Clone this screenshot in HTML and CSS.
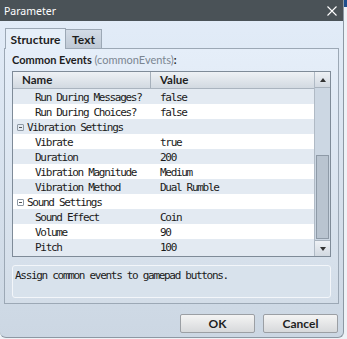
FILE: index.html
```html
<!DOCTYPE html>
<html lang="en">
<head>
    <meta charset="UTF-8">
    <meta name="viewport" content="width=device-width, initial-scale=1.0">
    <title>Parameter</title>
    <link rel="stylesheet" href="styles.css">
</head>
<body>

<div class="window">
    <div class="titlebar">
        <span class="title">Parameter</span>
        <svg class="close" width="10" height="10" viewBox="0 0 10 10">
            <path d="M0.5 0.5 L9.5 9.5 M9.5 0.5 L0.5 9.5" stroke="#fff" stroke-width="1.1" fill="none"/>
        </svg>
    </div>

    <div class="content">
        <div class="tabs">
            <div class="tab active">Structure</div>
            <div class="tab">Text</div>
        </div>

        <div class="panel">
            <div class="field-label">Common Events <span class="key">(commonEvents)</span>:</div>

            <div class="grid">
                <div class="grid-main">
                    <div class="grid-head">
                        <div class="col-name">Name</div>
                        <div class="col-value">Value</div>
                    </div>
                    <div class="row blue child"><span class="name">Run During Messages?</span><span class="value">false</span></div>
                    <div class="row child"><span class="name">Run During Choices?</span><span class="value">false</span></div>
                    <div class="row blue group"><span class="toggle"></span><span class="name">Vibration Settings</span></div>
                    <div class="row child"><span class="name">Vibrate</span><span class="value">true</span></div>
                    <div class="row blue child"><span class="name">Duration</span><span class="value">200</span></div>
                    <div class="row child"><span class="name">Vibration Magnitude</span><span class="value">Medium</span></div>
                    <div class="row blue child"><span class="name">Vibration Method</span><span class="value">Dual Rumble</span></div>
                    <div class="row group"><span class="toggle"></span><span class="name">Sound Settings</span></div>
                    <div class="row blue child"><span class="name">Sound Effect</span><span class="value">Coin</span></div>
                    <div class="row child"><span class="name">Volume</span><span class="value">90</span></div>
                    <div class="row blue child"><span class="name">Pitch</span><span class="value">100</span></div>
                </div>
                <div class="scrollbar">
                    <div class="sb-btn"><span class="arrow up"></span></div>
                    <div class="sb-track">
                        <div class="sb-thumb"></div>
                    </div>
                    <div class="sb-btn"><span class="arrow down"></span></div>
                </div>
            </div>

            <div class="description">Assign common events to gamepad buttons.</div>
        </div>

        <div class="buttons">
            <button class="btn">OK</button>
            <button class="btn">Cancel</button>
        </div>
    </div>
</div>
<div class="desk"></div>

</body>
</html>
```

FILE: styles.css
```css
body {
    margin: 0;
    display: flex;
    height: 339px;
    overflow: hidden;
    background: #eef2f6;
    font-family: Lato, "Noto Sans", sans-serif;
}
.window {
    width: 344px;
    height: 338px;
    box-sizing: border-box;
    border-right: 1px solid #8d98a3;
    border-bottom: 1px solid #8d98a3;
    border-radius: 0 0 6px 6px;
    background: linear-gradient(#e3edf9, #ccd7e3);
    display: flex;
    flex-direction: column;
    overflow: hidden;
}
.desk {
    flex: 1;
    background: linear-gradient(#1e4f8d 0 7px, #eef2f6 7px);
}
.titlebar {
    height: 21px;
    background: #4a5257;
    color: #fff;
    display: flex;
    align-items: center;
    justify-content: space-between;
    padding: 0 6px 0 4px;
    font-family: "Noto Sans", sans-serif;
    font-size: 10.5px;
}
.tabs {
    display: flex;
    align-items: flex-end;
    padding-left: 1px;
    height: 20px;
}
.content {
    padding: 7px 4px 0 4px;
}
.tab {
    box-sizing: border-box;
    border: 1px solid #9ca8b5;
    border-bottom: none;
    font-size: 12px;
    font-weight: 700;
    color: #1e1e1e;
    display: flex;
    align-items: center;
    justify-content: center;
}
.tab.active {
    width: 61px;
    height: 21px;
    background: #e6eff9;
    position: relative;
    top: 1px;
    z-index: 1;
}
.tab:not(.active) {
    width: 36px;
    height: 19px;
    background: linear-gradient(#d2dbe6, #bfc9d5);
    border-left: none;
}
.panel {
    box-sizing: border-box;
    width: 335px;
    height: 256px;
    border: 1px solid #9ca8b5;
    background: linear-gradient(#e5eef9, #d3dde8);
    padding: 2px 7px 0 7px;
}
.field-label {
    font-size: 11px;
    font-weight: 700;
    color: #1e1e1e;
    height: 20px;
    line-height: 18px;
}
.key {
    color: #7b8692;
    font-weight: 400;
}
.grid {
    display: flex;
    height: 186px;
    width: 319px;
    box-sizing: border-box;
    border: 1px solid #7f8b98;
    background: #e3eaf2;
    overflow: hidden;
}
.grid-main {
    flex: 1;
}
.grid-head {
    display: flex;
    height: 16px;
    background: linear-gradient(#eef1f5, #d2d9e1);
    border-bottom: 1px solid #aab4bf;
    font-size: 11.5px;
    font-weight: 700;
    color: #1e1e1e;
    line-height: 16px;
}
.col-name {
    width: 128px;
    padding-left: 9px;
    border-right: 1px solid #a6b0bb;
}
.col-value {
    padding-left: 9px;
}
.row {
    display: flex;
    height: 15px;
    align-items: center;
    background: #fff;
    font-family: "DejaVu Sans Mono", monospace;
    font-size: 11px;
    letter-spacing: -1.3px;
    color: #1a1a1a;
    padding-top: 1px;
    box-sizing: border-box;
}
.row.blue {
    background: #e3eaf2;
}
.row .name {
    width: 125px;
}
.row.child .name {
    padding-left: 22px;
}
.row.group .name {
    padding-left: 3px;
}
.toggle {
    width: 7px;
    height: 7px;
    margin-left: 4px;
    border: 1px solid #8e99a5;
    box-sizing: border-box;
    border-radius: 1px;
    position: relative;
}
.toggle::after {
    content: "";
    position: absolute;
    left: 1px;
    top: 2px;
    width: 3px;
    height: 1px;
    background: #555;
}
.scrollbar {
    width: 15px;
    display: flex;
    flex-direction: column;
    background: #ccd7e3;
    border-left: 1px solid #b0bac5;
}
.sb-btn {
    height: 15px;
    background: linear-gradient(#eef1f5, #d2d9e1);
    border-bottom: 1px solid #a9b3be;
    display: flex;
    align-items: center;
    justify-content: center;
}
.sb-btn:last-child {
    border-bottom: none;
    border-top: 1px solid #a9b3be;
}
.arrow {
    width: 0;
    height: 0;
    border-left: 3px solid transparent;
    border-right: 3px solid transparent;
}
.arrow.up {
    border-bottom: 4px solid #333;
}
.arrow.down {
    border-top: 4px solid #333;
}
.sb-track {
    flex: 1;
    display: flex;
    flex-direction: column;
    justify-content: flex-end;
}
.sb-thumb {
    height: 82px;
    margin: 0 1px 1px 1px;
    background: #b9c4d0;
    border: 1px solid #8e9aa7;
}
.description {
    box-sizing: border-box;
    margin-top: 8px;
    height: 33px;
    width: 319px;
    border: 1px solid #f3f6fa;
    border-radius: 3px;
    background: #d8e2ec;
    padding: 3px 2px;
    font-family: "DejaVu Sans Mono", monospace;
    font-size: 11px;
    letter-spacing: -1.3px;
    color: #1a1a1a;
}
.buttons {
    display: flex;
    justify-content: flex-end;
    gap: 8px;
    padding: 10px 1px 0 0;
}
.btn {
    width: 75px;
    height: 19px;
    border: 1px solid #9b9fa4;
    border-radius: 2px;
    background: linear-gradient(#f4f4f4, #d7d9db);
    font-family: Lato, "Noto Sans", sans-serif;
    font-size: 12px;
    font-weight: 700;
    color: #1e1e1e;
    padding: 0;
    cursor: pointer;
}
```
